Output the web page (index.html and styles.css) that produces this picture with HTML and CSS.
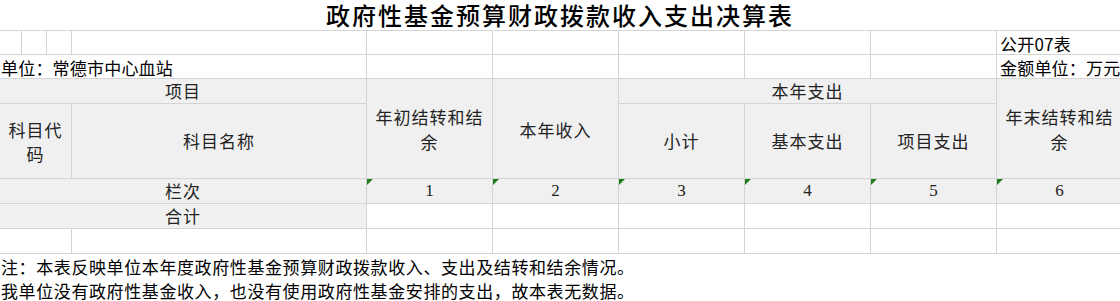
FILE: index.html
```html
<!DOCTYPE html>
<html lang="zh-CN">
<head>
<meta charset="utf-8">
<title>政府性基金预算财政拨款收入支出决算表</title>
<link rel="stylesheet" href="styles.css">
</head>
<body>
<div class="page">
  <div class="title">政府性基金预算财政拨款收入支出决算表</div>
  <table class="sheet">
    <colgroup>
      <col class="c-a"><col class="c-b"><col class="c-b"><col class="c-name">
      <col class="c-n"><col class="c-n"><col class="c-n"><col class="c-n"><col class="c-n"><col class="c-n">
    </colgroup>
    <tr class="r-top">
      <td></td><td></td><td></td><td></td>
      <td></td><td></td><td></td><td></td><td></td>
      <td class="meta">公开07表</td>
    </tr>
    <tr class="r-unit">
      <td colspan="4" class="meta">单位：常德市中心血站</td>
      <td></td><td></td><td></td><td></td><td></td>
      <td class="meta">金额单位：万元</td>
    </tr>
    <tr class="r-h1">
      <td colspan="4" class="hd">项目</td>
      <td rowspan="2" class="hd wrap">年初结转和结余</td>
      <td rowspan="2" class="hd wrap">本年收入</td>
      <td colspan="3" class="hd">本年支出</td>
      <td rowspan="2" class="hd wrap">年末结转和结余</td>
    </tr>
    <tr class="r-h2">
      <td colspan="3" class="hd wrap">科目代码</td>
      <td class="hd">科目名称</td>
      <td class="hd">小计</td>
      <td class="hd">基本支出</td>
      <td class="hd">项目支出</td>
    </tr>
    <tr class="r-row">
      <td colspan="4" class="hd">栏次</td>
      <td class="hd num flag">1</td>
      <td class="hd num flag">2</td>
      <td class="hd num flag">3</td>
      <td class="hd num flag">4</td>
      <td class="hd num flag">5</td>
      <td class="hd num flag">6</td>
    </tr>
    <tr class="r-row">
      <td colspan="4" class="hd">合计</td>
      <td></td><td></td><td></td><td></td><td></td><td></td>
    </tr>
    <tr class="r-row">
      <td colspan="3"></td><td></td>
      <td></td><td></td><td></td><td></td><td></td><td></td>
    </tr>
  </table>
  <div class="notes">
    <p>注：本表反映单位本年度政府性基金预算财政拨款收入、支出及结转和结余情况。</p>
    <p>我单位没有政府性基金收入，也没有使用政府性基金安排的支出，故本表无数据。</p>
  </div>
</div>
</body>
</html>
```

FILE: styles.css
```css
html, body {
  margin: 0;
  padding: 0;
  overflow: hidden;
  background: #ffffff;
}

body {
  font-family: "Noto Sans CJK SC", "Noto Sans", sans-serif;
  color: #111111;
}

.page {
  width: 1120px;
  height: 301px;
  overflow: hidden;
}

.title {
  height: 30px;
  line-height: 30px;
  text-align: center;
  font-size: 24px;
  font-weight: 500;
  letter-spacing: 2px;
  color: #000000;
  white-space: nowrap;
}

.sheet {
  table-layout: fixed;
  width: 1123px;
  border-collapse: separate;
  border-spacing: 0;
}

.c-a { width: 22px; }
.c-b { width: 25px; }
.c-name { width: 295px; }
.c-n { width: 126px; }

.sheet td {
  position: relative;
  padding: 0 2px;
  border-right: 1px solid #d4d4d4;
  border-bottom: 1px solid #d4d4d4;
  font-size: 17px;
  line-height: 20px;
  overflow: visible;
  white-space: nowrap;
}

.r-top td {
  border-top: 1px solid #d4d4d4;
}

.r-top { height: 25px; }
.r-unit { height: 24px; }
.r-h1 { height: 25px; }
.r-h2 { height: 75px; }
.r-row { height: 25px; }

.meta {
  vertical-align: bottom;
  text-align: left;
  color: #000000;
  letter-spacing: 0.2px;
}

.r-top .meta,
.r-unit .meta {
  padding-left: 3px;
}

.r-unit td:first-child {
  padding-left: 1px;
}

.hd {
  background: #f0f0f0;
  text-align: center;
  vertical-align: middle;
  color: #222222;
  letter-spacing: 1px;
}

.hd.wrap {
  white-space: normal;
  line-height: 25px;
  padding: 1px 2px 0 2px;
}

.r-h2 .hd.wrap {
  line-height: 24px;
}

.num {
  font-family: "Liberation Serif", serif;
  font-size: 16px;
  letter-spacing: 0;
  padding-top: 4px;
}

.flag::before {
  content: "";
  position: absolute;
  top: 0;
  left: 0;
  width: 0;
  height: 0;
  border-top: 6px solid #1c7c1c;
  border-right: 6px solid transparent;
}

.notes {
  padding-left: 1px;
}

.notes p {
  margin: 0;
  height: 24px;
  line-height: 24px;
  padding-top: 1px;
  box-sizing: border-box;
  font-size: 17px;
  letter-spacing: 0.6px;
  color: #000000;
  white-space: nowrap;
}
```
